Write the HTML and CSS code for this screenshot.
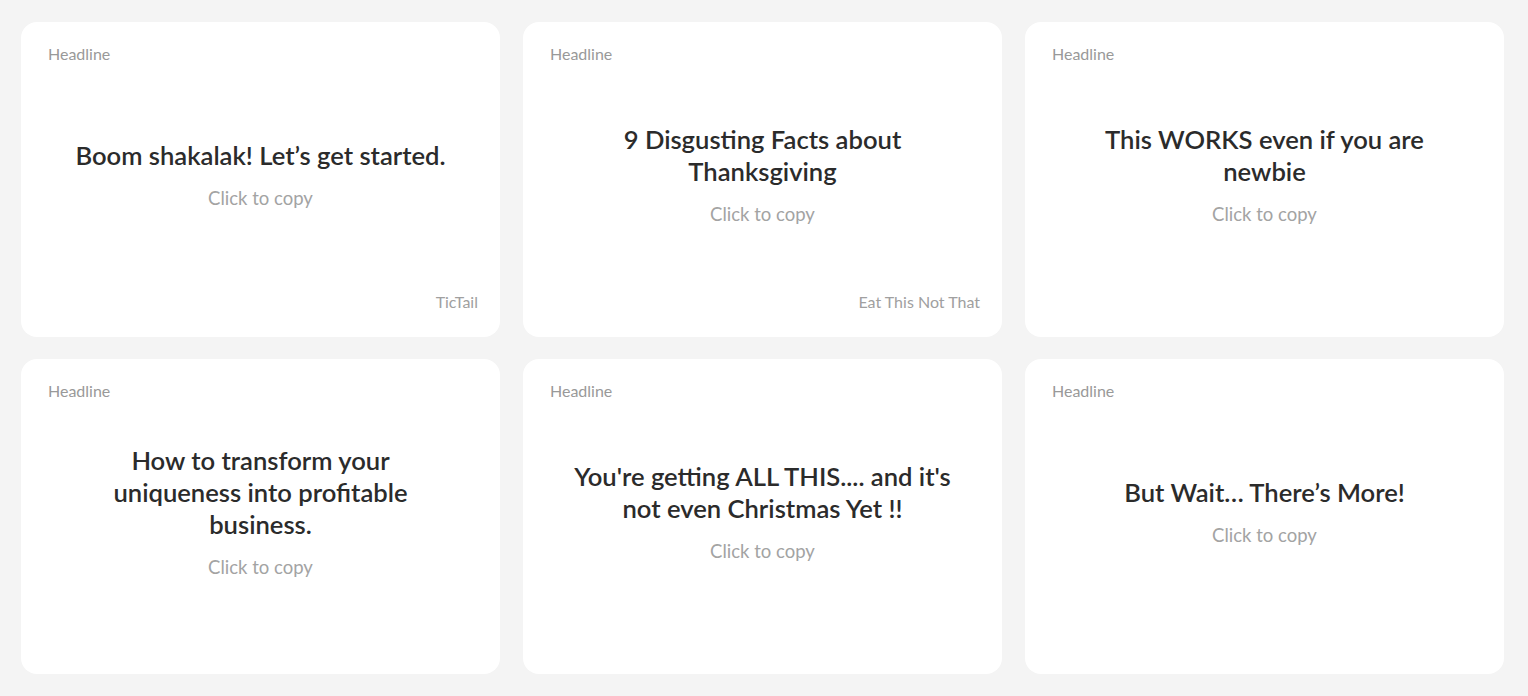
FILE: index.html
```html
<!DOCTYPE html>
<html lang="en">
<head>
    <meta charset="UTF-8">
    <meta name="viewport" content="width=device-width, initial-scale=1.0">
    <title>Headlines</title>
    <link rel="stylesheet" href="styles.css">
</head>
<body>
    <div class="card-grid">
        <div class="card">
            <div class="card-label">Headline</div>
            <div class="card-body">
                <div class="card-title">Boom shakalak! Let’s get started.</div>
                <div class="card-copy">Click to copy</div>
            </div>
            <div class="card-source">TicTail</div>
        </div>
        <div class="card">
            <div class="card-label">Headline</div>
            <div class="card-body">
                <div class="card-title">9 Disgusting Facts about Thanksgiving</div>
                <div class="card-copy">Click to copy</div>
            </div>
            <div class="card-source">Eat This Not That</div>
        </div>
        <div class="card">
            <div class="card-label">Headline</div>
            <div class="card-body">
                <div class="card-title">This WORKS even if you are newbie</div>
                <div class="card-copy">Click to copy</div>
            </div>
            <div class="card-source"></div>
        </div>
        <div class="card">
            <div class="card-label">Headline</div>
            <div class="card-body">
                <div class="card-title">How to transform your uniqueness into profitable business.</div>
                <div class="card-copy">Click to copy</div>
            </div>
            <div class="card-source"></div>
        </div>
        <div class="card">
            <div class="card-label">Headline</div>
            <div class="card-body">
                <div class="card-title">You're getting ALL THIS.... and it's not even Christmas Yet !!</div>
                <div class="card-copy">Click to copy</div>
            </div>
            <div class="card-source"></div>
        </div>
        <div class="card">
            <div class="card-label">Headline</div>
            <div class="card-body">
                <div class="card-title">But Wait… There’s More!</div>
                <div class="card-copy">Click to copy</div>
            </div>
            <div class="card-source"></div>
        </div>
    </div>
</body>
</html>
```

FILE: styles.css
```css
html, body {
    margin: 0;
    padding: 0;
}
body {
    background-color: #f4f4f4;
    font-family: Lato, "Noto Sans", sans-serif;
}
.card-grid {
    display: grid;
    grid-template-columns: repeat(3, 479px);
    grid-auto-rows: 315px;
    column-gap: 23px;
    row-gap: 22px;
    padding: 22px 21px;
}
.card {
    background-color: #fff;
    border-radius: 16px;
    display: flex;
    flex-direction: column;
    padding: 23px 22px 25px 27px;
    box-sizing: border-box;
}
.card-label {
    font-size: 16px;
    line-height: 18px;
    color: #999;
}
.card-body {
    flex: 1;
    display: flex;
    flex-direction: column;
    justify-content: center;
    align-items: center;
    text-align: center;
    margin-left: -5px;
    padding-bottom: 8px;
}
.card-title {
    max-width: 380px;
    font-size: 25.6px;
    line-height: 32px;
    font-weight: 600;
    color: #2b2b2b;
}
.card-copy {
    margin-top: 16px;
    font-size: 18.5px;
    line-height: 22px;
    color: #a3a3a3;
}
.card-source {
    height: 20px;
    text-align: right;
    font-size: 16px;
    line-height: 20px;
    color: #a0a0a0;
}
```
